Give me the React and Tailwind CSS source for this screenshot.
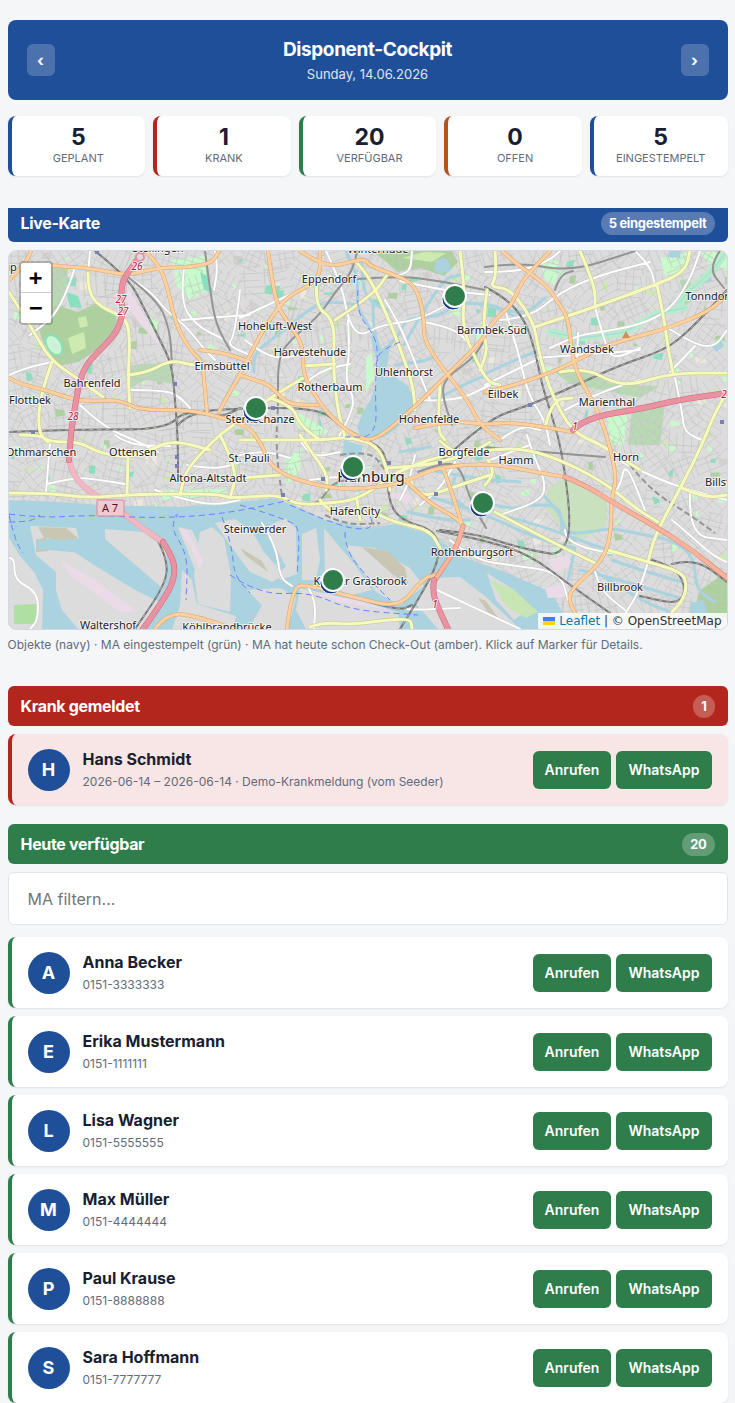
import { useState } from 'react';

const STATS = [
  { value: 5, label: 'Geplant', border: 'border-[#1f4f99]' },
  { value: 1, label: 'Krank', border: 'border-[#b3261e]' },
  { value: 20, label: 'Verfügbar', border: 'border-[#2e7d4a]' },
  { value: 0, label: 'Offen', border: 'border-[#b3541e]' },
  { value: 5, label: 'Eingestempelt', border: 'border-[#1f4f99]' }
];

const SICK = [
  { name: 'Hans Schmidt', info: '2026-06-14 – 2026-06-14 · Demo-Krankmeldung (vom Seeder)' }
];

const AVAILABLE = [
  { name: 'Anna Becker', info: '0151-3333333' },
  { name: 'Erika Mustermann', info: '0151-1111111' },
  { name: 'Lisa Wagner', info: '0151-5555555' },
  { name: 'Max Müller', info: '0151-4444444' },
  { name: 'Paul Krause', info: '0151-8888888' },
  { name: 'Sara Hoffmann', info: '0151-7777777' }
];

// ---- map data, all in map units ----

const MARKERS = [[455, 296], [256, 408], [353, 467], [483, 503], [333, 580]];

const LABELS = [
  ['Winterhude', 378, 253], ['Eppendorf', 329, 283], ['Hoheluft-West', 275, 330], ['Harvestehude', 310, 356],
  ['Eimsbüttel', 222, 370], ['Rotherbaum', 330, 391], ['Uhlenhorst', 404, 376], ['Barmbek-Süd', 492, 334],
  ['Wandsbek', 587, 353], ['Tonndorf', 709, 300], ['Eilbek', 503, 398], ['Marienthal', 607, 406],
  ['Hohenfelde', 429, 423], ['Bahrenfeld', 92, 387], ['Flottbek', 30, 404], ['Sternschanze', 260, 423],
  ['Othmarschen', 41, 456], ['Ottensen', 133, 456], ['St. Pauli', 249, 462], ['Altona-Altstadt', 208, 482],
  ['Borgfelde', 464, 456], ['Hamm', 516, 464], ['Horn', 626, 461], ['Billstedt', 726, 486],
  ['HafenCity', 355, 515], ['Steinwerder', 255, 533], ['Rothenburgsort', 472, 556], ['Kleiner Grasbrook', 360, 585],
  ['Billbrook', 620, 591], ['Waltershof', 108, 629], ['Köhlbrandbrücke', 227, 631], ['Stellingen', 158, 252], ['up', 10, 271]
];

const EXITS = [['26', 137, 270], ['27', 121, 303], ['27', 123, 315], ['28', 73, 420], ['1', 575, 430], ['2', 724, 398], ['1', 435, 608]];

const WATER = [
  '9,500 60,502 100,505 180,507 240,502 275,498 300,508 325,520 370,528 395,524 430,534 465,558 505,572 532,584 552,592 562,612 568,629 9,629',
  '378,378 395,377 408,386 414,399 413,411 400,425 386,436 375,439 360,436 357,427 363,412 371,399 375,386',
  '371,335 383,350 390,344 388,360 384,380 377,380 379,362 373,350',
  '344,440 363,446 360,457 343,457', '436,260 446,258 452,270 440,274 434,270', '700,275 710,272 712,281 702,284',
  '669,251 681,251 680,258 668,257', '712,346 720,338 724,346 716,352', '690,603 704,600 708,618 690,622'
];

const ISLANDS = [
  '9,538 20,556 34,572 43,590 42,629 9,629',
  '30,526 76,528 79,539 36,539 36,549 70,549 94,565 135,590 162,603 146,629 78,629 62,610 56,590 56,572 36,555',
  '105,529 155,533 166,550 167,575 160,597 105,560', '178,527 192,530 203,553 201,568 195,570 188,552',
  '200,532 212,527 224,538 231,575 230,612 198,604 194,575', '215,523 235,519 253,533 264,552 284,575 272,582 250,572 232,548',
  '182,570 192,580 197,604 236,616 233,629 172,629 180,606', '247,590 280,588 296,597 288,629 249,629 262,605',
  '265,528 285,518 296,528 297,574 280,580', '302,534 316,528 320,560 316,580 302,580', '324,528 338,545 356,566 372,590 352,595 325,586',
  '345,545 375,548 410,568 424,586 400,605 376,592', '300,588 345,599 398,612 400,629 306,629 296,610',
  '312,512 365,512 372,519 350,524 325,519', '428,578 460,577 485,596 520,629 438,629 416,604', '487,573 514,590 525,612 514,620 496,600'
];

const SAND = ['36,540 46,537 48,551 36,552', '38,527 66,528 78,538 70,541 44,538', '240,548 262,561 268,572 246,556', '362,547 388,551 405,568 408,584 392,574', '478,598 486,601 500,620 492,618'];
const SHRUB = ['56,305 78,312 98,302 116,315 118,330 100,348 78,362 58,366 42,340 38,326', '372,251 452,251 458,262 444,276 420,268 398,272 384,260', '700,590 727,572 727,618 704,612 697,600'];
const MEADOW = [
  '40,268 68,268 66,295 44,318 36,302', '132,365 172,362 174,384 146,380 130,388', '548,488 566,478 590,492 607,502 606,526 580,540 562,527 546,508',
  '632,408 665,404 660,445 628,445', '680,280 690,279 694,300 684,306', '553,371 580,370 612,384 660,386 640,398 612,392 570,384'
];
const LIGHT_GREEN = ['172,260 205,256 208,290 190,300 176,285', '296,411 330,432 316,436 290,420', '285,458 302,448 300,470 286,486', '607,415 628,412 624,445 610,445', '492,580 540,592 548,620 520,622', '540,256 560,262 555,285 545,280', '660,258 690,252 686,270 665,276', '150,315 158,322 156,335 148,326', '24,600 38,602 37,629 14,629 14,600', '165,490 230,489 218,496 160,500', '700,252 727,252 727,270 710,266'];
const PINK = ['127,286 136,301 162,348 141,325 128,307', '178,527 187,531 203,560 200,570 192,550', '60,560 92,578 138,612 120,612 70,575', '308,590 360,601 392,610 340,602', '545,588 568,584 566,597 548,598', '548,560 568,555 572,565 556,572', '391,492 412,496 408,504 392,497'];

const CANALS = [
  '346,251 356,270 358,290 357,308 372,330 381,352', '357,305 332,300 310,308 285,330 254,352 254,372', '381,352 396,340 405,322 412,318 440,316 462,300 505,310 526,314 545,298',
  '373,305 373,325 378,345', '388,310 374,306 363,290 362,262', '404,345 440,280 460,275', '396,365 420,362 432,358', '485,376 468,382 440,398 420,402',
  '485,374 510,362 540,350', '462,304 490,302 515,317', '392,476 415,492 440,500 480,512 540,540 575,548', '430,470 470,478 520,482', '474,500 510,510 528,505 560,505 562,530',
  '545,497 560,512 566,534 590,532 612,528 640,534 672,540 694,556 696,590 715,602', '500,515 540,525 600,548 640,558', '580,570 620,580 680,598', '575,548 568,580',
  '596,572 640,600 670,612', '612,560 640,570 682,582', '400,452 430,447', '408,512 440,520 470,520', '455,478 448,495 463,505'
];

const STREAMS = ['580,338 605,335 625,333 645,320 660,312 685,308', '550,332 580,338', '727,251 712,272 690,290 680,302'];

const WHITE = [
  '75,267 62,310 30,335', '9,375 25,368 52,362', '90,251 88,275', '130,390 165,390 180,397 190,408', '80,405 105,428 135,440 158,452', '125,275 150,290 165,310 185,325 205,350 215,360',
  '182,320 218,317 250,315', '215,251 218,268 214,290', '184,268 180,300 195,325 225,340', '240,290 235,335 227,345 250,355', '240,318 300,290 330,276', '245,340 270,360 300,355',
  '326,251 342,285 348,320 360,337 380,325 420,320 460,297', '303,385 320,370 350,364', '348,320 350,350 345,380 355,400 348,420 337,440', '395,275 410,275 412,251', '385,300 397,320 408,345 418,370 430,400',
  '400,281 440,290 490,295', '424,322 455,328 470,345', '418,400 455,402 490,385', '485,272 520,272 550,260 560,251', '500,320 530,318 560,292 600,275 650,262', '635,251 650,265 655,285',
  '550,348 575,336 600,332 640,325 670,310 690,280 700,251', '535,358 575,355 620,352 640,350', '578,333 577,362', '595,307 604,340 612,360 640,348', '485,385 505,375 540,358', '505,310 518,350 528,395 545,420 550,445',
  '565,410 600,392 640,380', '675,378 682,410 684,432 702,440', '668,328 695,345 715,347 727,330', '695,346 670,372', '500,440 520,425 540,430', '47,484 75,477 100,480 125,484', '50,442 46,493', '9,558 15,558 14,580 38,592 38,620 30,629',
  '115,435 128,445 170,446', '155,490 185,500 215,505 240,500', '262,523 276,545 280,578 292,586', '307,585 316,600 314,629', '450,540 475,560 510,565 560,572 568,600', '407,609 412,610 460,608',
  '437,590 520,629', '527,435 535,460 545,480 543,500 500,515', '565,530 565,545 640,558', '490,460 530,445', '607,500 620,490 625,460 645,510', '622,462 660,480 690,490 727,500', '648,562 640,590 625,614', '690,490 688,535 727,540',
  '672,520 690,535 712,555 727,562', '595,572 600,590 625,610', '415,455 410,480 400,500', '420,505 440,490 455,462', '300,440 310,458 340,452', '310,480 345,475 375,480', '187,465 215,470 240,462', '240,455 262,450 290,458'
];

const YELLOW = [
  '88,273 88,292 100,307 127,318 130,342 128,375 130,408', '128,375 147,373 170,360 193,365', '9,292 30,325 50,360 77,378 103,397', '52,362 40,395 38,432 48,442', '20,435 40,435 50,442 80,442 97,452 127,458 150,450 173,440 210,450',
  '128,458 127,495', '9,493 50,493 87,498 127,495 160,494 217,494 230,498 247,497 280,495 298,505 330,503 355,500 380,485 390,475 440,455 490,450 525,448 568,463 608,485 635,508 658,522',
  '220,435 187,465 180,495', '220,435 238,470 230,498', '220,435 240,420 270,398 303,378', '354,260 367,272 387,315 400,348 413,385 415,410', '318,272 313,305 335,320 333,368 338,412 345,437', '335,320 373,295 387,275',
  '303,366 335,364', '460,251 465,288 462,328 477,362 488,382 500,385', '495,251 497,275 490,287 508,288 525,308 535,328 540,358 552,395 572,432 602,445 640,470', '535,327 595,307 655,285 685,272 690,251', '580,251 595,285 595,307',
  '657,285 663,312 668,348 673,373', '560,372 585,368 612,382 632,385 672,373 727,373', '727,392 715,412 702,445 682,485 655,535 648,562', '682,488 705,498 727,495', '240,478 280,475', '240,440 280,440 320,440 350,437 377,445 387,468 390,490',
  '300,435 310,450 328,475 326,490', '320,500 330,515 370,510 393,522 430,530 440,548', '310,627 323,622 350,625 410,617 412,628', '495,512 552,542 595,563', '608,550 648,562 682,572 687,585 683,600 672,612', '440,441 460,460 490,442', '440,385 437,430 445,440',
  '485,485 495,475 488,460', '357,500 360,520', '485,450 465,455 430,465 387,468', '410,478 415,500 460,485 490,475', '270,398 292,405 300,425 320,440', '487,290 482,330 488,350 480,370', '545,427 552,400 572,398'
];

const ORANGE = [
  '31,251 27,262 9,280', '45,265 75,267 100,270 125,275 140,272 160,268 190,267 212,263 219,251', '145,251 160,265 168,290 176,325 190,350 203,362 204,380 207,412', '9,378 17,383 45,390 75,400 95,401 120,400 140,410 180,410 200,412 230,420 250,428 262,445 270,465 290,478 330,488 357,489 393,485 413,478 440,467 490,463 535,472 565,477',
  '219,412 228,395 240,375 250,355 263,330 278,308 290,295 320,280 320,251', '268,251 272,280 278,308 290,325 303,345 303,375 315,395 325,410 340,425 355,436 375,442 420,402 447,375 483,340 492,322 512,305 520,285 530,272 550,251',
  '300,251 317,262 335,266 350,262 365,259 370,266 395,275 412,283 420,298 424,320 424,340 440,365 460,390 470,405 480,425 500,440', '240,375 255,380 270,385 285,402 300,405 318,405', '502,251 518,265 530,273 548,287 558,302 568,318 571,345 575,368 585,388 595,405 607,435 617,478 611,500 611,535 602,562 572,588 568,602 585,629',
  '485,392 505,388 545,375 572,363 602,347 635,337 668,328 708,312 727,295', '415,428 450,420 485,425 505,422 545,427 572,432', '407,482 427,502 457,518 463,526', '443,468 453,495 463,528', '287,629 292,587 307,585 357,598 400,608 423,578 436,575', '155,629 167,612 200,617 233,629', '200,350 222,352 250,362'
];

const TRUNK = ['565,477 585,485 612,502 658,528 692,550 727,578', '463,526 458,545 447,562 435,580'];
const MOTORWAY = ['142,251 139,258 128,272 122,283 121,300 123,310 120,325 112,338 97,353 86,365 80,380 76,400 71,432 69,460', '163,542 172,556 175,570 172,585 160,605 143,629', '573,430 585,418 645,408 678,400 727,393', '434,580 432,592 440,612 448,629'];
const TUNNEL = ['69,460 73,475 85,488 98,497 122,512 145,530 163,542'];

const RAIL = [
  '95,251 128,277 145,310 160,340 172,365 175,400 178,440 178,480', '9,432 70,429 165,430 185,410 220,418 240,408', '178,425 190,412 240,408 318,408 340,425 360,437 380,447 387,460 388,500 400,520 437,531 440,560 418,600 400,629',
  '485,287 505,297 525,320 535,350 542,385 550,410 562,450 572,530 560,555 540,552 510,545 480,535 440,530', '437,531 485,540 530,555 570,585 610,613', '440,463 485,420 530,405 570,388 620,365 665,350 690,330 727,290',
  '357,598 398,611 412,605', '158,541 168,560 165,585 135,629', '648,559 672,565 686,585 680,605 640,596', '672,564 695,558 727,582'
];
const SUBWAY = ['205,251 210,290 216,325 230,350', '128,277 158,300 170,330 172,365', '357,251 354,270 335,292 320,315 290,340 278,358 278,405', '358,279 400,276 440,281 485,290', '485,267 520,262 570,272 635,251', '555,290 560,275 573,271', '485,338 478,355 445,378 442,395 452,425', '283,497 298,505 320,503 332,482 360,478', '418,472 440,463 460,465 470,500 486,528', '485,447 540,452 605,457', '720,251 708,268 724,288'];
const SUBWAY_TUNNEL = ['278,408 275,440 282,497', '325,515 345,525 380,523', '630,465 650,490 690,515 715,533', '340,455 370,450 385,470'];
const FERRY = [
  '9,514 40,518 90,515 150,518 200,516 245,510 290,500', '240,505 290,520 300,530 297,575', '175,516 180,512 170,527 188,555 186,600', '222,517 232,545 234,575 250,593', '290,505 340,527 370,530 373,520 365,510', '345,532 345,550 370,580 390,600', '230,575 260,595 310,592 350,610 418,615',
  '9,515 15,540 23,553', '358,290 356,312 375,336 378,355 375,385 377,437 345,437', '400,342 380,350 376,365', '9,522 30,522 40,515'
];

// midpoint smoothing keeps the hand-placed points soft at the joints
function toPath(str) {
  const p = str.split(' ').map((s) => s.split(',').map(Number));
  let d = `M${p[0]}`;
  for (let i = 1; i < p.length - 1; i++) {
    d += ` Q${p[i]} ${(p[i][0] + p[i + 1][0]) / 2},${(p[i][1] + p[i + 1][1]) / 2}`;
  }
  return `${d} L${p[p.length - 1]}`;
}

function createRandom(seed) {
  let s = seed;
  return () => {
    s = (s * 16807) % 2147483647;
    return s / 2147483647;
  };
}

function buildStreets() {
  const rnd = createRandom(71);
  let d = '';
  for (let y = 255; y < 640; y += 27) {
    for (let x = 10; x < 735; x += 27) {
      const a = rnd() * Math.PI;
      const cos = Math.cos(a);
      const sin = Math.sin(a);
      for (let i = -2; i <= 2; i++) {
        const o = i * 7 + rnd() * 3;
        const l1 = 6 + rnd() * 11;
        const l2 = 6 + rnd() * 11;
        d += `M${(x - cos * l1 - sin * o).toFixed(1)},${(y - sin * l1 + cos * o).toFixed(1)}L${(x + cos * l2 - sin * o).toFixed(1)},${(y + sin * l2 + cos * o).toFixed(1)}`;
        if (rnd() > 0.45) {
          d += `M${(x + sin * l1 + cos * o).toFixed(1)},${(y - cos * l1 + sin * o).toFixed(1)}L${(x - sin * l2 + cos * o).toFixed(1)},${(y + cos * l2 + sin * o).toFixed(1)}`;
        }
      }
    }
  }
  return d;
}

function buildPatches() {
  const rnd = createRandom(4021);
  const colors = ['#c8facc', '#c8facc', '#cdebb0', '#add19e', '#88e0be', '#eee8dc', '#d3d0cf'];
  return Array.from({ length: 330 }, () => {
    const x = 9 + rnd() * 718;
    const y = 251 + rnd() * 310;
    const w = 2 + rnd() * 8;
    const h = 2 + rnd() * 7;
    const k = rnd() * 4 - 2;
    return {
      points: `${x},${y} ${x + w},${y + k} ${x + w + k},${y + h} ${x + k},${y + h + k}`,
      fill: colors[Math.floor(rnd() * colors.length)]
    };
  });
}

const STREETS = buildStreets();
const PATCHES = buildPatches();

function Areas({ items, fill }) {
  return items.map((points) => <polygon key={points} points={points} fill={fill} />);
}

function Lines({ items, color, casing, width, dash }) {
  const d = items.map(toPath).join(' ');
  return (
    <g fill="none" strokeLinejoin="round" strokeLinecap={dash ? 'butt' : 'round'}>
      {casing && <path d={d} stroke={casing} strokeWidth={width + 1} />}
      <path d={d} stroke={color} strokeWidth={width} strokeDasharray={dash} />
    </g>
  );
}

function CityMap() {
  return (
    <svg className="block w-full h-full" viewBox="9 251 718 378" preserveAspectRatio="xMidYMid slice" role="img" aria-label="Karte von Hamburg">
      <rect x="-400" y="0" width="1600" height="900" fill="#dcdcdc" />
      {PATCHES.map((p) => <polygon key={p.points} points={p.points} fill={p.fill} />)}
      <Areas items={SHRUB} fill="#add19e" />
      <Areas items={MEADOW} fill="#b9d9b4" />
      <Areas items={LIGHT_GREEN} fill="#c8facc" />
      <path d={STREETS} stroke="#c4c4c4" strokeWidth="0.7" fill="none" />
      <polygon points="548,488 566,478 590,492 607,502 606,526 580,540 562,527 546,508" fill="#c9e1bf" />
      <polygon points="56,308 78,315 95,308 112,320 112,332 96,344 76,355 58,352 46,338 46,322" fill="#add19e" />
      <polygon points="68,338 84,332 86,348 72,354" fill="#cdebb0" />
      <polygon points="78,318 86,316 88,326 80,328" fill="#cdebb0" />
      <polygon points="424,252 446,253 432,262 402,258" fill="#cdebb0" />
      <Areas items={WATER} fill="#aad3df" />
      <Areas items={ISLANDS} fill="#dcdcdc" />
      <Areas items={SAND} fill="#c9c7b4" />
      <Areas items={PINK} fill="#ebdbe8" />
      <polygon points="490,580 514,590 538,612 526,618 506,606" fill="#c8e6b4" />
      <polygon points="14,605 36,604 36,624 14,624" fill="#aedfa3" />
      <polygon points="372,352 374,378 366,392 366,358" fill="#c8facc" />
      {/* harbour basins cut into the islands */}
      <polygon points="79,539 105,539 160,586 162,603 128,580 82,553 36,549 36,541" fill="#aad3df" />
      <polygon points="254,524 262,524 286,566 280,572" fill="#aad3df" />
      <Lines items={CANALS} color="#aad3df" width={3} />
      <Lines items={STREAMS} color="#b5ecca" width={7} />
      <Lines items={STREAMS} color="#aad3df" width={1} />

      <ellipse cx="54" cy="345" rx="7" ry="11" transform="rotate(-32 54 345)" fill="#c8facc" stroke="#88e0be" strokeWidth="2" />
      <ellipse cx="54" cy="345" rx="3" ry="7" transform="rotate(-32 54 345)" fill="#cfeee0" />
      <polygon points="66,292 78,296 82,308 70,307" fill="#88e0be" />
      <polygon points="200,272 207,276 213,292 204,290" fill="#88e0be" />

      <Lines items={WHITE} color="#ffffff" casing="#c8c8c8" width={2} />
      <Lines items={SUBWAY} color="#949494" width={2} />
      <Lines items={SUBWAY_TUNNEL} color="#949494" width={2} dash="6 3" />
      <Lines items={RAIL} color="#767676" width={2} />
      <Lines items={RAIL} color="#b0b0b0" width={1} dash="4 4" />
      <Lines items={TUNNEL} color="#f0b8c4" casing="#e0a0ae" width={5} />
      <Lines items={YELLOW} color="#f7fabf" casing="#c3c68a" width={3} />
      <Lines items={ORANGE} color="#fcd0a0" casing="#dba466" width={3} />
      <Lines items={TRUNK} color="#f9b29c" casing="#d8836c" width={4} />
      <Lines items={MOTORWAY} color="#e892a2" casing="#d0667e" width={5} />
      <circle cx="140" cy="257" r="4" fill="#dcdcdc" stroke="#e892a2" strokeWidth="2" />
      <Lines items={FERRY} color="#6f7dff" width={1} dash="6 4" />

      {[[97, 252], [175, 384], [33, 432], [177, 457], [177, 466], [273, 408], [530, 405], [722, 422], [283, 495], [323, 479], [389, 463], [440, 463], [436, 494]].map(([x, y]) => (
        <rect key={`${x}-${y}`} x={x - 2} y={y - 2} width="4" height="4" fill="#7981b0" />
      ))}
      <path d="M622 338 l4 -7 l4 7 z" fill="#d08f55" />

      <g fontFamily="'Noto Sans', sans-serif" textAnchor="middle">
        <g fontSize="11" fill="#222222" stroke="#ffffff" strokeOpacity="0.7" strokeWidth="2" paintOrder="stroke" strokeLinejoin="round">
          {LABELS.map(([text, x, y]) => <text key={text} x={x} y={y}>{text}</text>)}
          <text x="371" y="482" fontSize="15">Hamburg</text>
        </g>
        <g fontSize="10" fontStyle="italic" fill="#a8203a" stroke="#ffffff" strokeOpacity="0.8" strokeWidth="2" paintOrder="stroke">
          {EXITS.map(([text, x, y]) => <text key={`${x}-${y}`} x={x} y={y}>{text}</text>)}
        </g>
        <rect x="97" y="500" width="27" height="16" rx="1" fill="#eecbd3" stroke="#d68a9b" />
        <text x="110" y="512" fontSize="11" fill="#5a1028">A 7</text>
      </g>

      {MARKERS.map(([x, y]) => (
        <g key={`${x}-${y}`}>
          <circle cx={x - 2} cy={y + 3} r="11" fill="#123a80" stroke="#ffffff" strokeWidth="1" />
          <circle cx={x} cy={y} r="11" fill="#2e7d4a" stroke="#ffffff" strokeWidth="2" />
        </g>
      ))}
    </svg>
  );
}

function SectionHeader({ title, badge, className }) {
  return (
    <h2 className={`flex items-center justify-between px-[13px] text-base leading-6 font-bold tracking-[-0.02em] text-white ${className}`}>
      {title}
      <span className="rounded-full bg-white/25 px-2 text-[13px] leading-[23px]">{badge}</span>
    </h2>
  );
}

function PersonCard({ person, className }) {
  return (
    <li className={`flex items-center min-h-[71px] gap-[13px] rounded-lg border-l-4 px-4 py-3 shadow-[0_1px_2px_rgba(0,0,0,0.08)] ${className}`}>
      <div className="flex size-[42px] shrink-0 items-center justify-center rounded-full bg-[#1f4f99] text-lg font-bold text-white">
        {person.name[0]}
      </div>
      <div className="min-w-0 flex-1">
        <p className="text-base leading-6 font-bold text-[#1a2030]">{person.name}</p>
        <p className="text-xs leading-[22px] text-[#626b7a]">{person.info}</p>
      </div>
      <div className="flex gap-[5px]">
        <button type="button" className="h-[38px] rounded-md bg-[#2e7d4a] px-3 text-sm font-semibold text-white">Anrufen</button>
        <button type="button" className="h-[38px] rounded-md bg-[#2e7d4a] px-3 text-sm font-semibold text-white">WhatsApp</button>
      </div>
    </li>
  );
}

export default function App() {
  const [filter, setFilter] = useState('');
  const people = AVAILABLE.filter((p) => p.name.toLowerCase().includes(filter.toLowerCase()));

  return (
    <div className="min-h-screen bg-[#f4f6f8] font-['Inter',sans-serif] text-[#1a2030]">
      <main className="mx-auto w-full max-w-[720px] pt-5">
        <header className="flex items-center justify-between rounded-lg bg-[#1f4f99] px-[19px] py-4 text-white">
          <button type="button" aria-label="Vorheriger Tag" className="h-8 w-7 rounded-md bg-white/20 text-base font-bold">‹</button>
          <div className="text-center">
            <h1 className="text-[19px] leading-7 font-bold tracking-[-0.02em]">Disponent-Cockpit</h1>
            <p className="text-[13px] leading-5 text-white/85">Sunday, 14.06.2026</p>
          </div>
          <button type="button" aria-label="Nächster Tag" className="h-8 w-7 rounded-md bg-white/20 text-base font-bold">›</button>
        </header>

        <section className="mt-4 grid grid-cols-5 gap-2">
          {STATS.map((s) => (
            <div key={s.label} className={`rounded-lg border-l-4 bg-white pt-[9px] pb-[10px] text-center shadow-[0_1px_2px_rgba(0,0,0,0.08)] ${s.border}`}>
              <p className="text-[23px] leading-[25px] font-bold">{s.value}</p>
              <p className="text-[11px] leading-4 text-[#626b7a] uppercase">{s.label}</p>
            </div>
          ))}
        </section>

        <section className="mt-8">
          <SectionHeader title="Live-Karte" badge="5 eingestempelt" className="rounded-b-md bg-[#1f4f99] pt-[3px] pb-[7px]" />
          <div className="relative mt-2 h-[380px] overflow-hidden rounded-lg border border-[#d3d9e2]">
            <CityMap />
            <div className="absolute top-[10px] left-[10px] flex flex-col rounded-sm border-2 border-black/20 bg-clip-padding">
              <button type="button" aria-label="Hineinzoomen" className="size-[30px] rounded-t-xs border-b border-[#cccccc] bg-white font-['DejaVu_Sans_Mono',monospace] text-[22px] leading-none font-bold text-black">+</button>
              <button type="button" aria-label="Herauszoomen" className="size-[30px] rounded-b-xs bg-white font-['DejaVu_Sans_Mono',monospace] text-[22px] leading-none font-bold text-black">−</button>
            </div>
            <div className="absolute right-0 bottom-0 flex items-center bg-white/80 px-[5px] font-['DejaVu_Sans',sans-serif] text-xs leading-4 text-[#333333]">
              <svg className="mr-1 h-2 w-3" viewBox="0 0 12 8" aria-hidden="true">
                <path fill="#4c7be1" d="M0 0h12v4H0z" />
                <path fill="#ffd500" d="M0 4h12v4H0z" />
              </svg>
              <a href="#leaflet" className="text-[#0078a8]">Leaflet</a>
              <span className="whitespace-pre"> | © OpenStreetMap</span>
            </div>
          </div>
          <p className="mt-1 text-xs leading-[22px] text-[#626b7a]">
            Objekte (navy) · MA eingestempelt (grün) · MA hat heute schon Check-Out (amber). Klick auf Marker für Details.
          </p>
        </section>

        <section className="mt-[30px]">
          <SectionHeader title="Krank gemeldet" badge="1" className="rounded-md bg-[#b3261e] py-2" />
          <ul className="mt-2">
            {SICK.map((p) => (
              <PersonCard key={p.name} person={p} className="border-[#b3261e] bg-[#f8e5e5]" />
            ))}
          </ul>
        </section>

        <section className="mt-[19px]">
          <SectionHeader title="Heute verfügbar" badge="20" className="rounded-md bg-[#2e7d4a] py-2" />
          <input
            type="text"
            aria-label="MA filtern"
            placeholder="MA filtern..."
            value={filter}
            onChange={(e) => setFilter(e.target.value)}
            className="mt-2 block h-[53px] w-full rounded-md border border-[#e2e5ea] bg-white px-[19px] text-base placeholder:text-[#757575]"
          />
          <ul className="mt-3 flex flex-col gap-2">
            {people.map((p) => (
              <PersonCard key={p.name} person={p} className="border-[#2e7d4a] bg-white" />
            ))}
          </ul>
        </section>
      </main>
    </div>
  );
}
